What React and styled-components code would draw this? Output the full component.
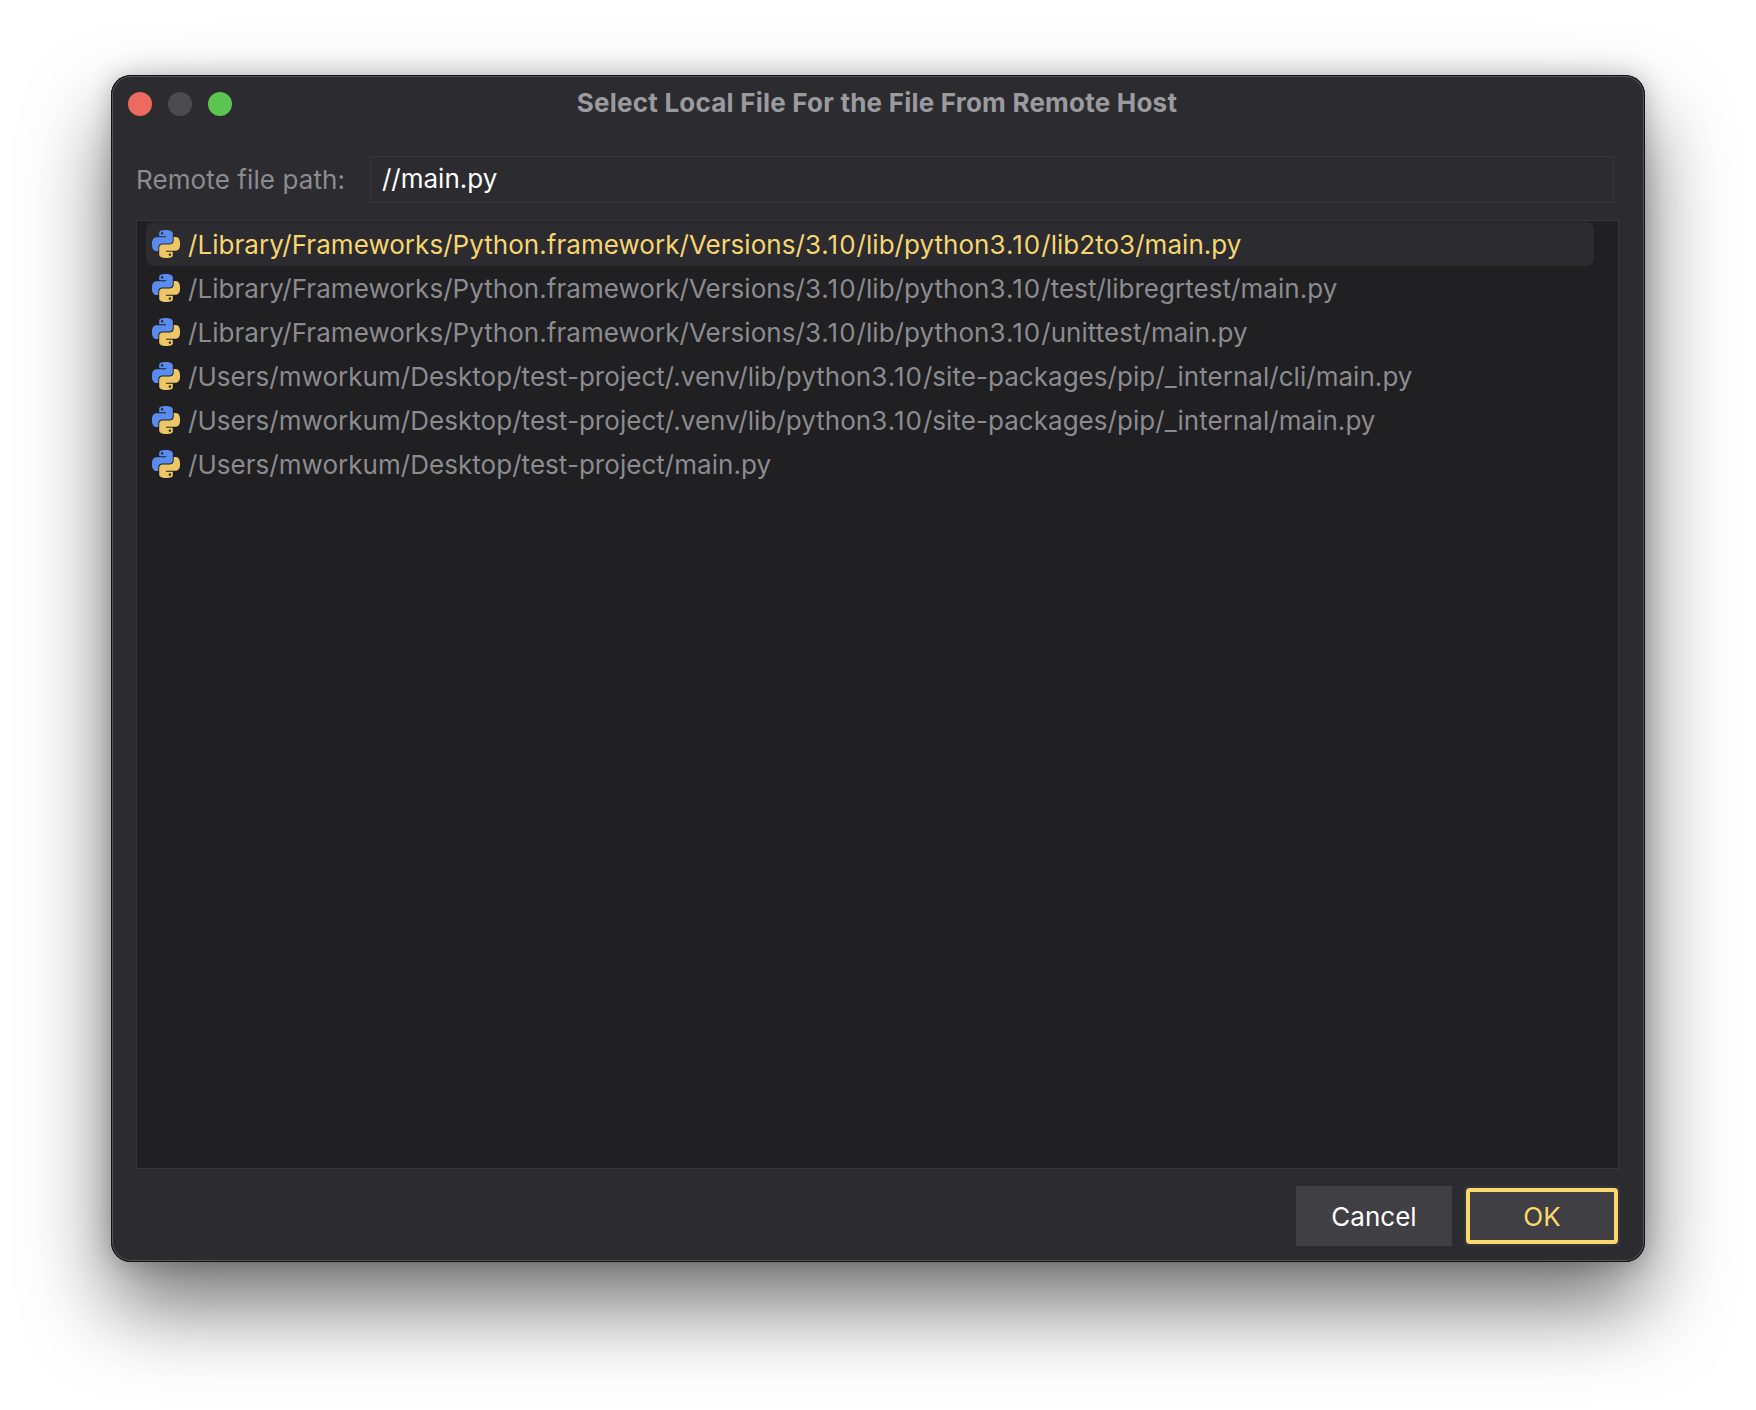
import React from "react";
import styled, { createGlobalStyle } from "styled-components";

const Global = createGlobalStyle`
  html, body {
    margin: 0;
    background: #fff;
  }
  * {
    box-sizing: border-box;
  }
`;

const Page = styled.div`
  width: 1756px;
  height: 1410px;
  padding: 75px 111px 148px;
  font-family: Inter, "Liberation Sans", sans-serif;
  font-size: 26px;
  overflow: hidden;
`;

const Window = styled.div`
  height: 100%;
  display: flex;
  flex-direction: column;
  background: #2c2b30;
  border-radius: 20px;
  padding: 0 25px 16px;
  box-shadow: inset 0 0 0 1px #111, inset 0 0 0 2px #56555a, 0 44px 84px rgba(0, 0, 0, 0.55), 0 0 24px rgba(0, 0, 0, 0.22);
`;

const TitleBar = styled.div`
  position: relative;
  height: 54px;
  padding: 1px 2px 0 0;
  flex: none;
  display: flex;
  align-items: center;
  justify-content: center;
  color: #9b9a9e;
  font-weight: 700;
  letter-spacing: 0.22px;
`;

const Lights = styled.div`
  position: absolute;
  left: -8px;
  top: 17px;
  display: flex;
  gap: 16px;
`;

const Light = styled.span`
  width: 24px;
  height: 24px;
  border-radius: 50%;
  background: ${(p) => p.$color};
`;

const PathRow = styled.div`
  flex: none;
  display: flex;
  align-items: center;
  margin-top: 27px;
  padding-right: 6px;
`;

const PathLabel = styled.label`
  width: 234px;
  flex: none;
  padding-bottom: 1px;
  color: #8c8b8f;
  letter-spacing: 0.1px;
`;

const PathInput = styled.div`
  flex: 1;
  height: 47px;
  display: flex;
  align-items: center;
  padding: 0 0 2px 11px;
  border: 1px solid #38373c;
  color: #fff;
`;

const List = styled.div`
  flex: 1;
  margin: 17px 1px 0 0;
  padding: 1px 24px 0 9px;
  background: #201f22;
  border: 1px solid #38373c;
`;

const Row = styled.div`
  height: 44px;
  display: flex;
  align-items: center;
  gap: 8px;
  padding-left: 6px;
  border-radius: 8px;
  white-space: pre;
  letter-spacing: 0.04px;
  background: ${(p) => (p.$selected ? "#2c2b30" : "transparent")};
  color: ${(p) => (p.$selected ? "#f6d56f" : "#8c8b8f")};
`;

const RowText = styled.span`
  display: block;
`;

// the version digits run wider in the original font
const Version = styled.span`
  letter-spacing: 1px;
`;

const Footer = styled.div`
  flex: none;
  display: flex;
  justify-content: flex-end;
  gap: 12px;
  margin-top: 17px;
`;

const Button = styled.button`
  position: relative;
  width: 156px;
  height: 60px;
  border: 0;
  padding: 0;
  background: #403f43;
  color: #fff;
  font: inherit;
`;

const OkButton = styled(Button)`
  color: #fbd76c;
  box-shadow: inset 0 0 0 2px #353439;

  &::after {
    content: "";
    position: absolute;
    inset: 2px;
    border: 4px solid #fbd86d;
    border-radius: 4px;
  }
`;

const PythonIcon = () => (
  <svg width="28" height="28" viewBox="0 0 24 24" style={{ flex: "none" }}>
    <path
      fill="#5a8bef"
      d="M14.25.18l.9.2.73.26.59.3.45.32.34.34.25.34.16.33.1.3.04.26.02.2-.01.13V8.5l-.05.63-.13.55-.21.46-.26.38-.3.31-.33.25-.35.19-.35.14-.33.1-.3.07-.26.04-.21.02H8.77l-.69.05-.59.14-.5.22-.41.27-.33.32-.27.35-.2.36-.15.37-.1.35-.07.32-.04.27-.02.21v3.06H3.17l-.21-.03-.28-.07-.32-.12-.35-.18-.36-.26-.36-.36-.35-.46-.32-.59-.28-.73-.21-.88-.14-1.05-.05-1.23.06-1.22.16-1.04.24-.87.32-.71.36-.57.4-.44.42-.33.42-.24.4-.16.36-.1.32-.05.24-.01h.16l.06.01h8.16v-.83H6.18l-.01-2.75-.02-.37.05-.34.11-.31.17-.28.25-.26.31-.23.38-.2.44-.18.51-.15.58-.12.64-.1.71-.06.77-.04.84-.02 1.27.05zm-6.3 1.98l-.23.33-.08.41.08.41.23.34.33.22.41.09.41-.09.33-.22.23-.34.08-.41-.08-.41-.23-.33-.33-.22-.41-.09-.41.09z"
    />
    <path
      fill="#edc766"
      d="M21.04 6.11l.28.06.32.12.35.18.36.27.36.35.35.47.32.59.28.73.21.88.14 1.04.05 1.23-.06 1.23-.16 1.04-.24.86-.32.71-.36.57-.4.45-.42.33-.42.24-.4.16-.36.09-.32.05-.24.02-.16-.01h-8.22v.82h5.84l.01 2.76.02.36-.05.34-.11.31-.17.29-.25.25-.31.24-.38.2-.44.17-.51.15-.58.13-.64.09-.71.07-.77.04-.84.01-1.27-.04-1.07-.14-.9-.2-.73-.25-.59-.3-.45-.33-.34-.34-.25-.34-.16-.33-.1-.3-.04-.25-.02-.2.01-.13v-5.34l.05-.64.13-.54.21-.46.26-.38.3-.32.33-.24.35-.2.35-.14.33-.1.3-.06.26-.04.21-.02.13-.01h5.84l.69-.05.59-.14.5-.21.41-.28.33-.32.27-.35.2-.36.15-.36.1-.35.07-.32.04-.28.02-.21V6.07h2.09l.14.01zm-6.47 14.25l-.23.33-.08.41.08.41.23.33.33.23.41.08.41-.08.33-.23.23-.33.08-.41-.08-.41-.23-.33-.33-.23-.41-.08-.41.08z"
    />
  </svg>
);

const files = [
  "/Library/Frameworks/Python.framework/Versions/3.10/lib/python3.10/lib2to3/main.py",
  "/Library/Frameworks/Python.framework/Versions/3.10/lib/python3.10/test/libregrtest/main.py",
  "/Library/Frameworks/Python.framework/Versions/3.10/lib/python3.10/unittest/main.py",
  "/Users/mworkum/Desktop/test-project/.venv/lib/python3.10/site-packages/pip/_internal/cli/main.py",
  "/Users/mworkum/Desktop/test-project/.venv/lib/python3.10/site-packages/pip/_internal/main.py",
  "/Users/mworkum/Desktop/test-project/main.py",
];

const FilePath = ({ file }) => (
  <RowText>
    {file.split(/(3\.10)/).map((part, i) =>
      part === "3.10" ? <Version key={i}>{part}</Version> : part
    )}
  </RowText>
);

export default function App() {
  return (
    <>
      <Global />
      <Page>
        <Window>
          <TitleBar>
            <Lights>
              <Light $color="#ed6a5e" />
              <Light $color="#4b4a4e" />
              <Light $color="#5ec454" />
            </Lights>
            Select Local File For the File From Remote Host
          </TitleBar>
          <PathRow>
            <PathLabel>Remote file path:</PathLabel>
            <PathInput>//main.py</PathInput>
          </PathRow>
          <List>
            {files.map((file, i) => (
              <Row key={file} $selected={i === 0}>
                <PythonIcon />
                <FilePath file={file} />
              </Row>
            ))}
          </List>
          <Footer>
            <Button>Cancel</Button>
            <OkButton>OK</OkButton>
          </Footer>
        </Window>
      </Page>
    </>
  );
}
